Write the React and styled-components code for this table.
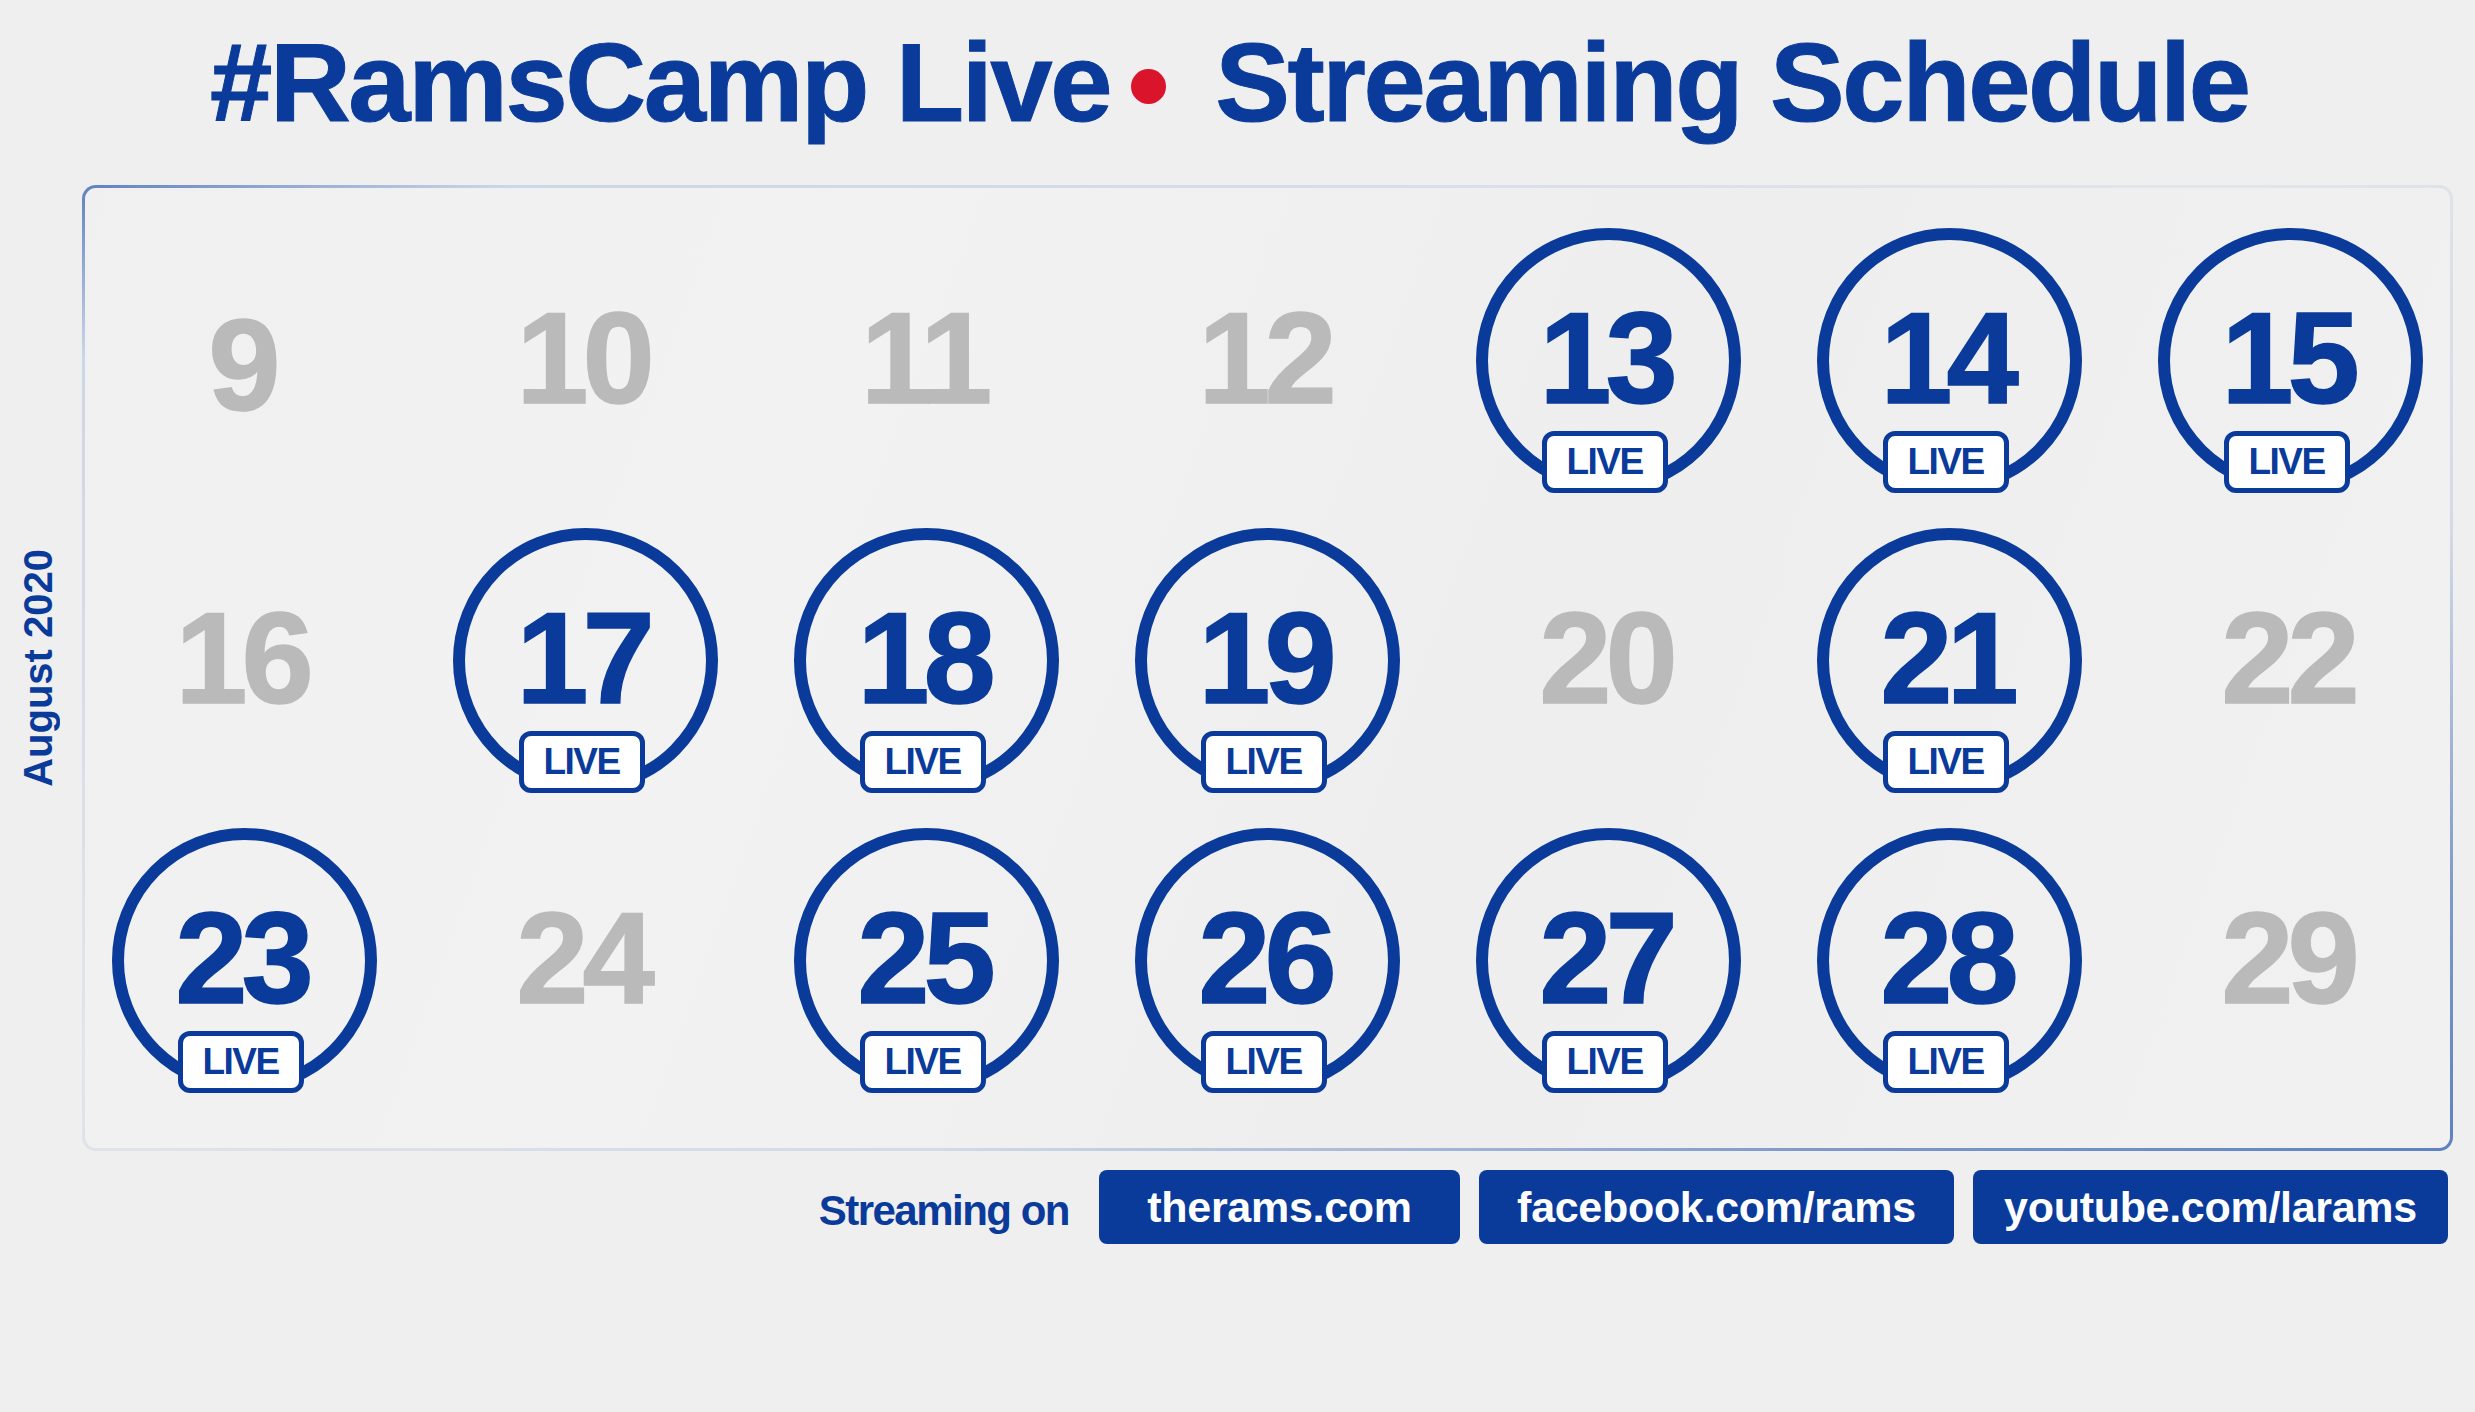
import React from 'react';
import styled, { createGlobalStyle } from 'styled-components';

const BLUE = '#0a3b9b';
const GREY = '#bababa';

const GlobalStyle = createGlobalStyle`
  body {
    margin: 0;
    background: #efefef;
    font-family: 'Liberation Sans', Arial, sans-serif;
  }
`;

const weeks = [
  [
    { day: 9, nudge: 14 },
    { day: 10 },
    { day: 11 },
    { day: 12 },
    { day: 13, live: true },
    { day: 14, live: true },
    { day: 15, live: true },
  ],
  [
    { day: 16 },
    { day: 17, live: true },
    { day: 18, live: true },
    { day: 19, live: true },
    { day: 20 },
    { day: 21, live: true },
    { day: 22 },
  ],
  [
    { day: 23, live: true },
    { day: 24 },
    { day: 25, live: true },
    { day: 26, live: true },
    { day: 27, live: true },
    { day: 28, live: true },
    { day: 29 },
  ],
];

const links = [
  { label: 'therams.com', width: 361 },
  { label: 'facebook.com/rams', width: 475 },
  { label: 'youtube.com/larams', width: 475 },
];

const DayCell = ({ day, live, nudge }) => (
  <Cell>
    {live ? (
      <Ring>
        <DayNumber $live>{day}</DayNumber>
        <LiveBadge>LIVE</LiveBadge>
      </Ring>
    ) : (
      <DayNumber $nudge={nudge}>{day}</DayNumber>
    )}
  </Cell>
);

const App = () => {
  return (
    <Page>
      <GlobalStyle />
      <Title>
        <span>#RamsCamp Live</span>
        <RedDot />
        <span>Streaming Schedule</span>
      </Title>

      <Main>
        <SideLabel>
          <span>August 2020</span>
        </SideLabel>
        <Panel>
          <Grid>
            {weeks.flat().map((d) => (
              <DayCell key={d.day} {...d} />
            ))}
          </Grid>
        </Panel>
      </Main>

      <Footer>
        <StreamingOn>Streaming on</StreamingOn>
        {links.map((l) => (
          <LinkButton key={l.label} $width={l.width}>
            {l.label}
          </LinkButton>
        ))}
      </Footer>
    </Page>
  );
};

export default App;

const Page = styled.div`
  width: 2475px;
  height: 1412px;
  overflow: hidden;
  background: #efefef;
  font-weight: 700;
`;

const Title = styled.h1`
  margin: 0;
  padding: 27px 0 0 210px;
  display: flex;
  align-items: center;
  font-size: 112px;
  line-height: 1;
  letter-spacing: -2.4px;
  color: ${BLUE};
  font-weight: 700;
  white-space: nowrap;
  -webkit-text-stroke: 1px ${BLUE};
`;

const RedDot = styled.span`
  width: 35px;
  height: 35px;
  border-radius: 50%;
  background: #d9142b;
  margin: 6px 49px 0 21px;
  flex-shrink: 0;
`;

const Main = styled.div`
  display: flex;
  margin-top: 46px;
`;

const SideLabel = styled.div`
  width: 82px;
  display: flex;
  align-items: center;
  justify-content: center;

  span {
    writing-mode: vertical-rl;
    transform: rotate(180deg);
    font-size: 40px;
    color: ${BLUE};
    white-space: nowrap;
    margin-right: 6px;
  }
`;

const Panel = styled.div`
  width: 2371px;
  height: 966px;
  box-sizing: border-box;
  padding-top: 22px;
  border: 3px solid transparent;
  border-radius: 14px;
  background:
    linear-gradient(110deg, #f0f0f0 0%, #f2f2f2 30%, #eeeeee 60%, #f1f1f1 100%) padding-box,
    linear-gradient(
        to bottom right,
        #5e81c0 0%,
        #cdd6e6 9%,
        #e2e5ea 45%,
        #d3dae6 68%,
        #819bc8 86%,
        #5e81c0 100%
      )
      border-box;
`;

const Grid = styled.div`
  display: grid;
  grid-template-columns: repeat(7, 1fr);
  grid-auto-rows: 300px;
  margin: 0 -11px;
`;

const Cell = styled.div`
  display: flex;
  align-items: center;
  justify-content: center;
`;

const Ring = styled.div`
  position: relative;
  width: 265px;
  height: 265px;
  box-sizing: border-box;
  border: 12px solid ${BLUE};
  border-radius: 50%;
  display: flex;
  align-items: center;
  justify-content: center;
`;

const DayNumber = styled.div`
  font-size: 130px;
  line-height: 1;
  letter-spacing: -6px;
  padding-right: 6px;
  color: ${(p) => (p.$live ? BLUE : GREY)};
  -webkit-text-stroke: 1.5px ${(p) => (p.$live ? BLUE : GREY)};
  margin-top: ${(p) => (p.$nudge ? p.$nudge : 0) - 4}px;
`;

const LiveBadge = styled.div`
  position: absolute;
  left: 50%;
  bottom: -12px;
  transform: translateX(calc(-50% - 4px));
  width: 126px;
  height: 62px;
  box-sizing: border-box;
  border: 5px solid ${BLUE};
  border-radius: 12px;
  background: #ffffff;
  display: flex;
  align-items: center;
  justify-content: center;
  font-size: 37px;
  letter-spacing: -1.5px;
  color: ${BLUE};
`;

const Footer = styled.div`
  display: flex;
  justify-content: flex-end;
  align-items: center;
  gap: 19px;
  margin-top: 19px;
  padding-right: 27px;
`;

const StreamingOn = styled.div`
  font-size: 42px;
  letter-spacing: -1.5px;
  color: ${BLUE};
  margin-right: 11px;
  padding-top: 8px;
`;

const LinkButton = styled.div`
  width: ${(p) => p.$width}px;
  height: 74px;
  border-radius: 8px;
  background: ${BLUE};
  color: #ffffff;
  display: flex;
  align-items: center;
  justify-content: center;
  font-size: 43px;
  letter-spacing: -0.3px;
`;
